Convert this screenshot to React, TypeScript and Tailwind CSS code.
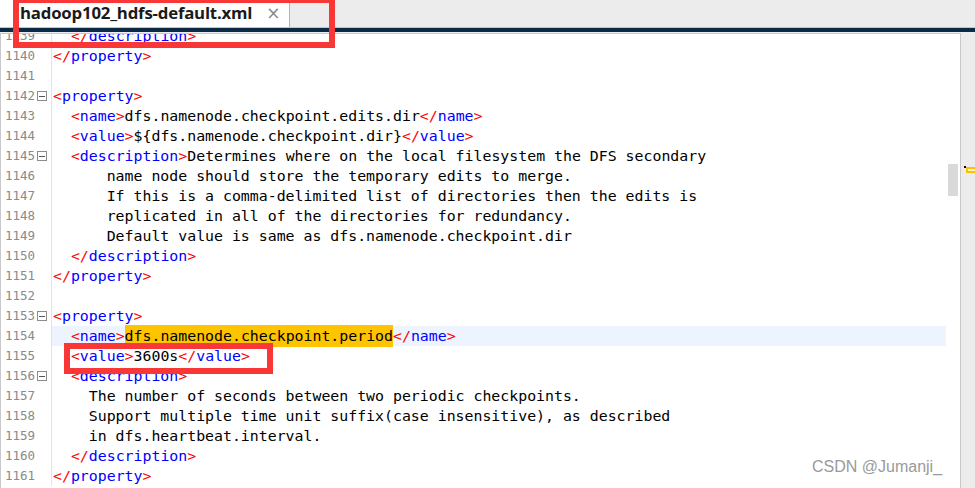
import React from 'react';

type Line = { n: number; text: string; fold?: boolean; current?: boolean; mark?: string };

const lines: Line[] = [
  { n: 1139, text: '  </description>' },
  { n: 1140, text: '</property>' },
  { n: 1141, text: '' },
  { n: 1142, text: '<property>', fold: true },
  { n: 1143, text: '  <name>dfs.namenode.checkpoint.edits.dir</name>' },
  { n: 1144, text: '  <value>${dfs.namenode.checkpoint.dir}</value>' },
  { n: 1145, text: '  <description>Determines where on the local filesystem the DFS secondary', fold: true },
  { n: 1146, text: '      name node should store the temporary edits to merge.' },
  { n: 1147, text: '      If this is a comma-delimited list of directories then the edits is' },
  { n: 1148, text: '      replicated in all of the directories for redundancy.' },
  { n: 1149, text: '      Default value is same as dfs.namenode.checkpoint.dir' },
  { n: 1150, text: '  </description>' },
  { n: 1151, text: '</property>' },
  { n: 1152, text: '' },
  { n: 1153, text: '<property>', fold: true },
  { n: 1154, text: '  <name>dfs.namenode.checkpoint.period</name>', current: true, mark: 'dfs.namenode.checkpoint.period' },
  { n: 1155, text: '  <value>3600s</value>' },
  { n: 1156, text: '  <description>', fold: true },
  { n: 1157, text: '    The number of seconds between two periodic checkpoints.' },
  { n: 1158, text: '    Support multiple time unit suffix(case insensitive), as described' },
  { n: 1159, text: '    in dfs.heartbeat.interval.' },
  { n: 1160, text: '  </description>' },
  { n: 1161, text: '</property>' },
];

function Code({ text, mark }: { text: string; mark?: string }) {
  const parts = text.split(/(<\/?[a-z]+>)/);
  return (
    <>
      {parts.map((p, i) => {
        const m = p.match(/^(<\/?)([a-z]+)(>)$/);
        if (m) {
          return (
            <span key={i}>
              <span className="text-[#ff0000]">{m[1]}</span>
              <span className="text-[#0000ff]">{m[2]}</span>
              <span className="text-[#ff0000]">{m[3]}</span>
            </span>
          );
        }
        if (mark && p === mark) {
          return (
            <span key={i} className="bg-[#ffc400]">
              {p}
            </span>
          );
        }
        return <span key={i}>{p}</span>;
      })}
    </>
  );
}

function FoldBox() {
  return (
    <div className="w-[10px] h-[10px] border border-[#8c8c8c] bg-white flex items-center justify-center">
      <div className="w-[6px] h-px bg-[#555]" />
    </div>
  );
}

export default function App() {
  return (
    <div className="relative w-[975px] h-[488px] overflow-hidden bg-[#ececec]">
      {/* tab bar */}
      <div className="h-[27px] flex bg-[#ececec]">
        <div className="w-[290px] bg-white border-r border-[#b4b4b4] flex items-center pl-[20px]">
          <span className="font-['Open_Sans',sans-serif] font-bold text-[16.8px] text-[#1a1a1a] tracking-[-0.2px] leading-none">
            hadoop102_hdfs-default.xml
          </span>
          <span className="ml-[14px] text-[#8a8a8a] text-[17px] leading-none font-['DejaVu_Sans',sans-serif]">×</span>
        </div>
      </div>
      <div className="h-px bg-[#c4c4c4]" />
      <div className="h-[4px] bg-[#0b2a46]" />
      <div className="h-[1px]" />

      {/* editor */}
      <div className="flex h-[460px]">
        <div className="w-[961px] bg-white border border-[#c9c9c9] flex overflow-hidden">
          <div className="flex-1 overflow-hidden">
            <div className="-mt-[8px] font-['DejaVu_Sans_Mono',monospace] text-[14.87px]">
              {lines.map((l) => (
                <div key={l.n} className="flex h-[20px] items-center">
                  <div className="w-[51px] shrink-0 h-full flex items-center border-r border-[#e3e3e3] bg-white">
                    <span className="pl-[4px] w-[36px] text-[12.5px] text-[#8a8a8a]">{l.n}</span>
                    {l.fold && <FoldBox />}
                  </div>
                  <div
                    className={`flex-1 h-full flex items-center pl-px whitespace-pre text-black ${
                      l.current ? 'bg-[#eef4fd]' : ''
                    }`}
                  >
                    <Code text={l.text} mark={l.mark} />
                  </div>
                </div>
              ))}
            </div>
          </div>
          {/* scrollbar */}
          <div className="w-[14px] shrink-0 pt-[130px] flex justify-center">
            <div className="w-[10px] h-[32px] bg-[#d9d9d9]" />
          </div>
        </div>
        <div className="flex-1 relative">
          <div className="absolute left-[3px] top-[133px] w-[2px] h-[2px] bg-black" />
          <div className="absolute left-[5px] top-[134px] w-[12px] h-[6px] border-2 border-[#ffc000] bg-[#fff4c4]" />
        </div>
      </div>

      {/* annotation boxes */}
      <div className="absolute left-[13px] top-[-3px] w-[322px] h-[51px] border-[6px] border-[#fa3737]" />
      <div className="absolute left-[64px] top-[343px] w-[209px] h-[31px] border-[6px] border-[#fa3737]" />

      {/* watermark */}
      <div className="absolute left-[812px] top-[459px] font-['Liberation_Sans',sans-serif] text-[16px] text-[#9a9a9a] leading-none">
        CSDN @Jumanji_
      </div>
    </div>
  );
}
